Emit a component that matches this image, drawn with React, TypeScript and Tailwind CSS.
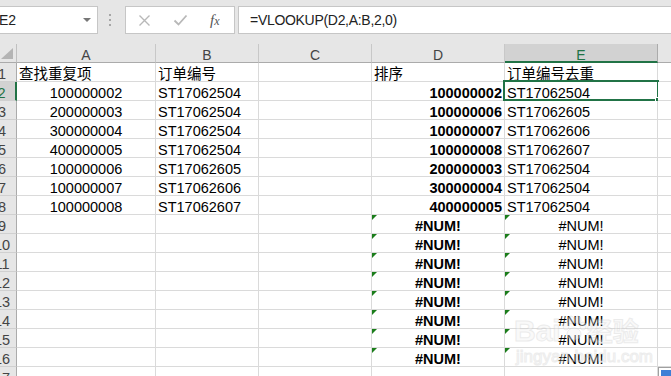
import React from "react";

const FONT = '"Liberation Sans", "Noto Sans CJK SC", Arial, sans-serif';

const colNames = ["A", "B", "C", "D", "E", "F"];

type Cell = { t?: string; align?: "l" | "c" | "r"; bold?: boolean; tri?: boolean };

const rows: Cell[][] = [];
rows.push([
  { t: "查找重复项", align: "l" },
  { t: "订单编号", align: "l" },
  {},
  { t: "排序", align: "l" },
  { t: "订单编号去重", align: "l" },
  {},
]);
const A = ["100000002", "200000003", "300000004", "400000005", "100000006", "100000007", "100000008"];
const B = ["ST17062504", "ST17062504", "ST17062504", "ST17062504", "ST17062605", "ST17062606", "ST17062607"];
const D = ["100000002", "100000006", "100000007", "100000008", "200000003", "300000004", "400000005"];
const E = ["ST17062504", "ST17062605", "ST17062606", "ST17062607", "ST17062504", "ST17062504", "ST17062504"];
for (let i = 0; i < 7; i++) {
  rows.push([
    { t: A[i], align: "c" },
    { t: B[i], align: "l" },
    {},
    { t: D[i], align: "r", bold: true },
    { t: E[i], align: "l" },
    {},
  ]);
}
for (let i = 0; i < 8; i++) {
  rows.push([{}, {}, {}, { t: "#NUM!", align: "c", bold: true, tri: true }, { t: "#NUM!", align: "c", tri: true }, {}]);
}
rows.push([{}, {}, {}, {}, {}, {}]);

function DataCell({ c, sel }: { c: Cell; sel?: boolean }) {
  const al = c.align === "c" ? "text-center" : c.align === "r" ? "text-right pr-[2px]" : "text-left pl-[2px]";
  return (
    <div
      className={`relative h-[19px] border-r border-b border-[#dadada] bg-white whitespace-nowrap text-[14.5px] leading-[16px] pt-[3px] text-black ${al} ${
        c.bold ? "font-bold" : "font-normal"
      }`}
    >
      {c.tri && (
        <div className="absolute top-0 left-0 w-0 h-0 border-t-[5px] border-r-[5px] border-t-[#1b7d1b] border-r-transparent" />
      )}
      {c.t}
      {sel && (
        <>
          <div className="absolute left-[-2px] top-[-2px] w-[156px] h-[21px] border-2 border-[#217346] pointer-events-none" />
          <div className="absolute left-[150px] top-[15px] w-[7px] h-[7px] bg-[#217346] border border-white" />
        </>
      )}
    </div>
  );
}

export default function App() {
  return (
    <div
      className="relative w-[671px] h-[376px] overflow-hidden bg-[#e6e6e6]"
      style={{ fontFamily: FONT }}
    >
      {/* toolbar */}
      <div className="flex h-[44px] pt-[6px]">
        <div className="ml-[-6px] w-[104px] h-[28px] shrink-0 bg-white border border-[#c6c6c6] flex items-center">
          <span className="pl-[4px] text-[14px] text-[#222]">E2</span>
          <div className="ml-auto mr-[6px] w-0 h-0 border-l-[4px] border-r-[4px] border-t-[4px] border-l-transparent border-r-transparent border-t-[#777]" />
        </div>
        <div className="ml-[11px] mt-[8px] flex flex-col gap-[3px] shrink-0">
          <div className="w-[2px] h-[2px] bg-[#a6a6a6]" />
          <div className="w-[2px] h-[2px] bg-[#a6a6a6]" />
          <div className="w-[2px] h-[2px] bg-[#a6a6a6]" />
        </div>
        <div className="ml-[14px] w-[110px] h-[28px] shrink-0 bg-white border border-[#c6c6c6] flex items-center">
          <svg className="ml-[12px]" width="13" height="13" viewBox="0 0 13 13">
            <path d="M1.5 1.5 L11.5 11.5 M11.5 1.5 L1.5 11.5" stroke="#b8b8b8" strokeWidth="1.4" fill="none" />
          </svg>
          <svg className="ml-[22px]" width="15" height="13" viewBox="0 0 15 13">
            <path d="M1.5 6.5 L5.5 10.5 L13.5 1.5" stroke="#b8b8b8" strokeWidth="1.8" fill="none" />
          </svg>
          <span
            className="ml-[22px] italic text-[#555] text-[15px] leading-none"
            style={{ fontFamily: '"Liberation Serif", "DejaVu Serif", serif' }}
          >
            f<span className="text-[12px]">x</span>
          </span>
        </div>
        <div className="ml-[3px] flex-1 h-[28px] mr-[-10px] bg-white border border-[#c6c6c6] flex items-center">
          <span className="pl-[11px] text-[14px] tracking-[-0.3px] text-[#222]">=VLOOKUP(D2,A:B,2,0)</span>
        </div>
      </div>

      {/* grid */}
      <div className="ml-[-12px] grid grid-cols-[29px_139px_103px_113px_133px_153px_80px]">
        {/* header row */}
        <div className="relative h-[19px] bg-[#e6e6e6] border-r border-b border-r-[#c0c0c0] border-b-[#ababab]">
          <svg className="absolute left-[12px] top-[3px]" width="14" height="12" viewBox="0 0 14 12">
            <path d="M13 1 L13 12 L1 12 Z" fill="#b4b4b4" />
          </svg>
        </div>
        {colNames.map((n) => (
          <div
            key={n}
            className={`h-[19px] text-center text-[14px] leading-[16px] pt-[3px] border-r ${
              n === "E"
                ? "bg-[#d2d2d2] border-r-[#ababab] border-b-2 border-b-[#217346] text-[#217346]"
                : "bg-[#e6e6e6] border-r-[#c8c8c8] border-b border-b-[#ababab] text-[#444]"
            }`}
          >
            {n}
          </div>
        ))}
        {rows.map((r, ri) => (
          <React.Fragment key={ri}>
            <div
              className={`h-[19px] text-center text-[14.5px] leading-[16px] pt-[3px] border-b border-b-[#d0d0d0] ${
                ri === 1
                  ? "bg-[#d2d2d2] border-r-2 border-r-[#217346] text-[#217346]"
                  : "bg-[#e6e6e6] border-r border-r-[#ababab] text-[#444]"
              }`}
            >
              {ri + 1}
            </div>
            {r.map((c, ci) => (
              <DataCell key={ci} c={c} sel={ri === 1 && ci === 4} />
            ))}
          </React.Fragment>
        ))}
      </div>

      {/* watermark */}
      <div className="absolute left-[514px] top-[314px] pointer-events-none select-none opacity-40">
        <div className="flex items-end leading-none">
          <span
            className="text-[30px] font-bold text-[#f2f2f2]"
            style={{ WebkitTextStroke: "1px #cfcfcf" }}
          >
            Bai
          </span>
          <svg width="26" height="30" viewBox="0 0 26 30" className="mb-[2px]">
            <g fill="#f2f2f2" stroke="#cfcfcf" strokeWidth="1">
              <ellipse cx="13" cy="20" rx="7" ry="6" />
              <ellipse cx="5" cy="12" rx="3" ry="4" />
              <ellipse cx="10" cy="6" rx="3" ry="4" />
              <ellipse cx="17" cy="6" rx="3" ry="4" />
              <ellipse cx="22" cy="12" rx="3" ry="4" />
            </g>
          </svg>
          <span
            className="text-[26px] font-bold text-[#f2f2f2] mb-[1px]"
            style={{ WebkitTextStroke: "1px #cfcfcf" }}
          >
            经验
          </span>
        </div>
        <div
          className="text-[17px] text-[#f2f2f2] leading-none mt-[2px] ml-[2px]"
          style={{ WebkitTextStroke: "1px #d2d2d2" }}
        >
          jingyan.baidu.com
        </div>
      </div>

      {/* bottom right corner icon */}
      <div className="absolute left-[658px] top-[367px] w-[20px] h-[14px] bg-white border border-[#a0a0a0]">
        <div className="absolute left-[2px] top-[2px] w-[14px] h-[10px] bg-[#3e7fd6]" />
      </div>
    </div>
  );
}
